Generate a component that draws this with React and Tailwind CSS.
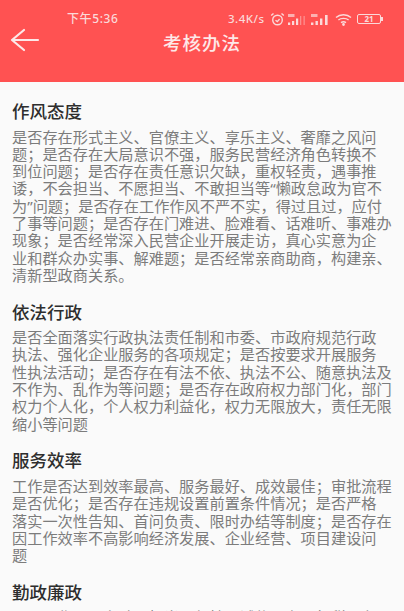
import React from "react";

// line breaks follow the reference, kept in the text with whitespace-pre-line
const sections = [
  {
    title: "作风态度",
    body: `是否存在形式主义、官僚主义、享乐主义、奢靡之风问
题；是否存在大局意识不强，服务民营经济角色转换不
到位问题；是否存在责任意识欠缺，重权轻责，遇事推
诿，不会担当、不愿担当、不敢担当等“懒政怠政为官不
为”问题；是否存在工作作风不严不实，得过且过，应付
了事等问题；是否存在门难进、脸难看、话难听、事难办
现象；是否经常深入民营企业开展走访，真心实意为企
业和群众办实事、解难题；是否经常亲商助商，构建亲、
清新型政商关系。`,
  },
  {
    title: "依法行政",
    body: `是否全面落实行政执法责任制和市委、市政府规范行政
执法、强化企业服务的各项规定；是否按要求开展服务
性执法活动；是否存在有法不依、执法不公、随意执法及
不作为、乱作为等问题；是否存在政府权力部门化，部门
权力个人化，个人权力利益化，权力无限放大，责任无限
缩小等问题`,
  },
  {
    title: "服务效率",
    body: `工作是否达到效率最高、服务最好、成效最佳；审批流程
是否优化；是否存在违规设置前置条件情况；是否严格
落实一次性告知、首问负责、限时办结等制度；是否存在
因工作效率不高影响经济发展、企业经营、项目建设问
题`,
  },
  {
    title: "勤政廉政",
    body: "是否工作日不主动、担当、保持、诚信，在开征税项务",
  },
];

const StatusIcons = () => (
  <div className="flex items-center text-[#fbd9d9]">
    <span className="w-[42px] text-[11.5px] font-medium leading-none tracking-[0.5px]">3.4K/s</span>
    <svg width="15" height="14" viewBox="0 0 15 14" fill="none" stroke="currentColor" strokeWidth="1.4">
      <circle cx="7.5" cy="8" r="4.8" />
      <path d="M5.5 8.2 7.3 9.6 9.6 7M1.2 3.6 3.5 1.4M13.8 3.6 11.5 1.4" />
    </svg>
    <svg width="18" height="13" viewBox="0 0 18 13" fill="currentColor" className="ml-[3px]">
      <rect x="0" y="9.5" width="2.2" height="2.5" />
      <rect x="4" y="8" width="2.2" height="4" />
      <rect x="8" y="5.5" width="2.2" height="6.5" />
      <rect x="12" y="3" width="1.3" height="9" opacity="0.45" />
      <rect x="15.5" y="3" width="1.3" height="9" opacity="0.45" />
      <rect x="0" y="1" width="6.5" height="3" opacity="0.7" />
    </svg>
    <svg width="19" height="13" viewBox="0 0 19 13" fill="currentColor" className="ml-[5px]">
      <rect x="0" y="9.5" width="2.4" height="2.5" />
      <rect x="4.5" y="8" width="2.4" height="4" />
      <rect x="9" y="5.5" width="2.4" height="6.5" />
      <rect x="14" y="2" width="2.6" height="10" />
      <rect x="0" y="1" width="6.5" height="3" opacity="0.7" />
    </svg>
    <svg width="17" height="13" viewBox="0 0 17 13" fill="none" stroke="currentColor" strokeWidth="1.4" className="ml-[5px]">
      <path d="M1 4.4C5 .8 12 .8 16 4.4M3.4 7C6 4.8 11 4.8 13.6 7M6 9.6C7.4 8.6 9.6 8.6 11 9.6" />
      <circle cx="8.5" cy="11.5" r="0.7" fill="currentColor" />
    </svg>
    <div className="ml-[5px] flex items-center">
      <div className="flex h-[10px] w-[24px] items-center justify-center rounded-[2px] border border-current text-[8px] font-bold leading-none">
        21
      </div>
      <div className="h-[4px] w-[2px] bg-current" />
    </div>
  </div>
);

const App = () => {
  return (
    <div className="h-[611px] w-[404px] overflow-hidden bg-[#fafafa] font-['Noto_Sans','Noto_Sans_CJK_SC',sans-serif] [text-spacing-trim:space-all]">
      <div className="h-[82px] bg-[#ff5252]">
        <div className="flex h-[30px] items-center justify-between pl-[67px] pr-[21px] pt-[8px]">
          <span className="text-[12px] font-medium leading-none tracking-[0.6px] text-[#fbd9d9]">下午5:36</span>
          <StatusIcons />
        </div>
        <div className="relative flex h-[26px] items-center justify-center">
          <svg
            width="30"
            height="24"
            viewBox="0 0 30 24"
            fill="none"
            stroke="#fde8e8"
            strokeWidth="2.2"
            strokeLinecap="round"
            strokeLinejoin="round"
            className="absolute left-[10px] top-[-2px]"
          >
            <path d="M2 12H28M14 2 2 12 14 22" />
          </svg>
          <h1 className="text-[18.5px] font-medium leading-none tracking-[1px] text-[#fde8e8]">考核办法</h1>
        </div>
      </div>
      <div className="px-3 pt-[17px]">
        {sections.map((section) => (
          <div key={section.title} className="mb-[15.5px]">
            <h2 className="mb-[5.5px] text-[17.5px] font-medium leading-[24px] text-[#2e2e2e]">{section.title}</h2>
            <p className="whitespace-pre-line text-[15.2px] leading-[17.3px] text-[#7c7c7c]">{section.body}</p>
          </div>
        ))}
      </div>
    </div>
  );
};

export default App;
